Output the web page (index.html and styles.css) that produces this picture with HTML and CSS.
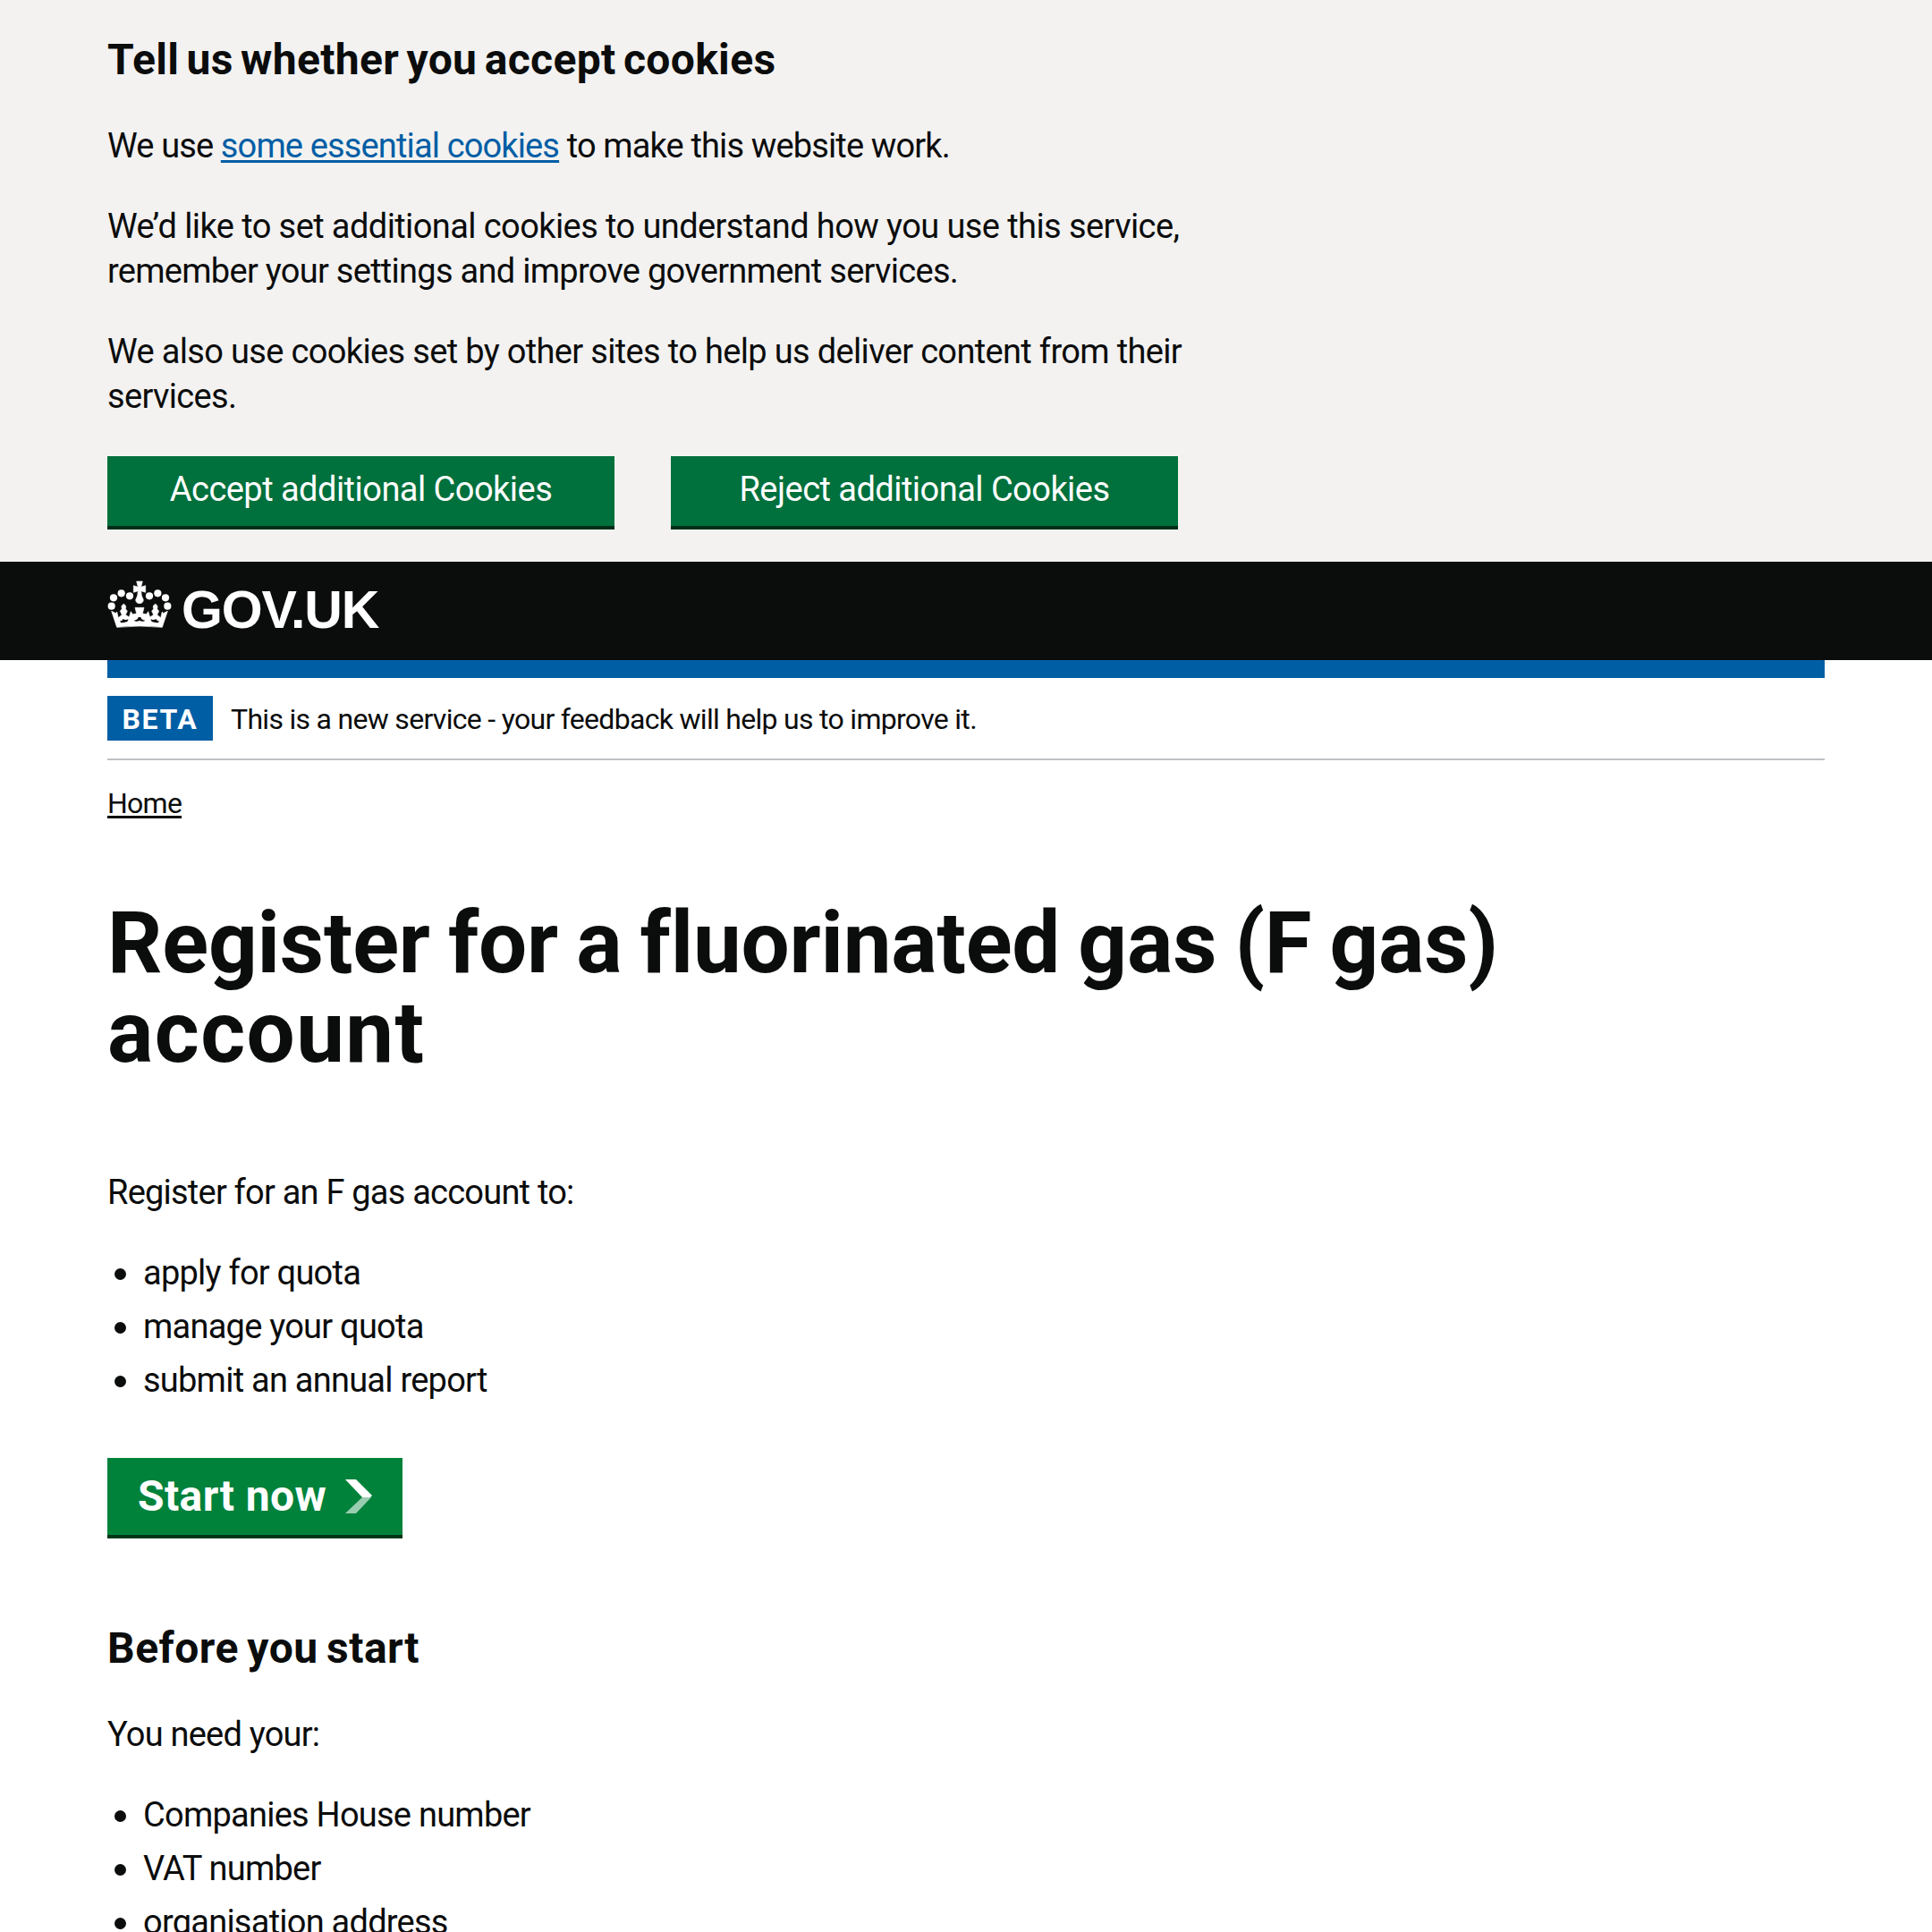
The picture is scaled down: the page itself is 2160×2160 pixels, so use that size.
FILE: index.html
```html
<!DOCTYPE html>
<html lang="en">
<head>
<meta charset="utf-8">
<title>Register for a fluorinated gas (F gas) account - GOV.UK</title>
<link rel="stylesheet" href="styles.css">
</head>
<body>
<section class="cookie-banner">
  <h2 class="heading cookie-heading">Tell us whether you accept cookies</h2>
  <p class="text text-tight">We use <a class="link" href="#">some essential cookies</a> to make this website work.</p>
  <p class="text"><span class="text-wide">We’d like to set additional cookies to understand how you use this service,</span><br><span class="text-narrow">remember your settings and improve government services.</span></p>
  <p class="text">We also use cookies set by other sites to help us deliver content from their<br>services.</p>
  <div class="button-group">
    <button class="button" type="button">Accept additional Cookies</button>
    <button class="button" type="button">Reject additional Cookies</button>
  </div>
</section>
<header class="header">
  <svg class="crown" viewBox="60 88 216 162" fill="#fff" aria-hidden="true">
    <circle cx="74" cy="174" r="12.3"/><circle cx="81" cy="146" r="12.3"/><circle cx="107" cy="131" r="12.3"/><circle cx="135" cy="140" r="12.3"/>
    <circle cx="201" cy="140" r="12.3"/><circle cx="229" cy="131" r="12.3"/><circle cx="255" cy="146" r="12.3"/><circle cx="262" cy="174" r="12.3"/>
    <path stroke="#fff" stroke-width="2" d="M158 91h20l-5 19 15-5v23l-15-5 2 16 6 14c0 7-6 12-13 12s-13-5-13-12l6-14 2-16-15 5v-23l15 5z"/>
    <path stroke="#fff" stroke-width="2" stroke-linejoin="round" d="M92 245l-18-54 15 7 3-5 5 20 12-10-6-12 6-8c-3-10 0-12 6-16 6 4 9 6 6 16l6 8-6 12 12 8 6-19 6 9 13-2-5-20h30l-5 20 13 2 6-9 6 19 12-8-6-12 6-8c-3-10 0-12 6-16 6 4 9 6 6 16l6 8-6 12 12 10 5-20 3 5 15-7-18 54q-76-8-152 0z"/>
    <path fill="#0b0c0c" d="M103 222q8 3 9-5 12 6 18 0 1 7-5 10-11 3-20 3zM233 222q-8 3-9-5-12 6-18 0-1 7 5 10 11 3 20 3zM149 222q13-1 15-11h8q2 10 15 11-8 6-19 0-11 6-19 0z"/>
  </svg>
  <span class="logotype">GOV.UK</span>
</header>
<div class="container">
  <div class="phase-banner">
    <strong class="tag">BETA</strong>
    <span class="phase-text">This is a new service - your feedback will help us to improve it.</span>
  </div>
  <nav class="breadcrumbs"><a class="crumb" href="#">Home</a></nav>
  <main>
    <h1 class="title">Register for a fluorinated gas (F gas)<br><span class="title-end">account</span></h1>
    <p class="text intro">Register for an F gas account to:</p>
    <ul class="list">
      <li>apply for quota</li>
      <li>manage your quota</li>
      <li>submit an annual report</li>
    </ul>
    <a class="start-button" href="#">Start now
      <svg class="arrow" viewBox="0 0 30 38" aria-hidden="true"><path fill="#fff" d="M0 0h12l18 18-2 2H19z"/><path fill="#99cdb0" d="M19 20h10L12 38H0z"/></svg>
    </a>
    <h2 class="heading section-heading">Before you start</h2>
    <p class="text intro">You need your:</p>
    <ul class="list">
      <li>Companies House number</li>
      <li>VAT number</li>
      <li>organisation address</li>
    </ul>
  </main>
</div>
</body>
</html>
```
FILE: styles.css
```css
html, body { height: 2160px; overflow: hidden; }
body { margin: 0; background: #fff; color: #0b0c0c; font-family: Roboto, "Liberation Sans", sans-serif; }
.cookie-banner { box-sizing: border-box; height: 628px; padding: 37px 120px 0; background: #f3f2f1; }
.heading { margin: 0; font-size: 48px; line-height: 60px; font-weight: 700; letter-spacing: 0.5px; word-spacing: -3px; }
.cookie-heading { margin-bottom: 41px; letter-spacing: 0.35px; word-spacing: -4px; }
.text { margin: 0 0 40px; font-size: 38px; line-height: 50px; letter-spacing: -0.66px; white-space: nowrap; }
.text-tight { letter-spacing: -0.86px; }
.text-wide { letter-spacing: -0.59px; }
.text-narrow { letter-spacing: -0.72px; }
.intro { letter-spacing: -0.78px; }
.link { color: #005ea5; text-decoration: underline; text-decoration-thickness: 3px; text-underline-offset: 3px; text-decoration-skip-ink: none; }
.button-group { display: flex; gap: 63px; padding-top: 2px; }
.button { box-sizing: border-box; width: 567px; height: 82px; padding: 0 0 4px; border: 0; border-bottom: 4px solid #002d18; background: #00703c; color: #fff; font: 400 38px/74px Roboto, "Liberation Sans", sans-serif; letter-spacing: -0.53px; }
.header { display: flex; align-items: flex-start; box-sizing: border-box; height: 110px; padding: 21px 120px 0; background: #0b0c0c; color: #fff; }
.crown { width: 72px; height: 54px; }
.logotype { margin-left: 11px; font-family: "Liberation Sans", sans-serif; font-size: 59px; line-height: 66px; font-weight: 700; letter-spacing: -1.2px; }
.container { margin: 0 120px; border-top: 20px solid #005ea5; }
.phase-banner { display: flex; gap: 20px; padding: 20px 0; border-bottom: 2px solid #bfc1c3; font-size: 32px; line-height: 48px; }
.tag { box-sizing: border-box; width: 118px; height: 50px; padding-top: 2px; background: #005ea5; color: #fff; text-align: center; font-weight: 700; letter-spacing: 1.6px; }
.phase-text { padding-top: 2px; letter-spacing: -0.7px; }
.breadcrumbs { margin-top: 23px; font-size: 32px; line-height: 50px; letter-spacing: -0.75px; }
.crumb { color: #0b0c0c; text-decoration: underline; text-decoration-thickness: 3px; text-underline-offset: 3px; }
.title { margin: 81px 0 104px; font-size: 96px; line-height: 100px; font-weight: 700; letter-spacing: -0.2px; word-spacing: -3.5px; }
.title-end { letter-spacing: 1.4px; }
.list { margin: 0; padding-left: 40px; list-style: none; font-size: 38px; line-height: 50px; letter-spacing: -0.76px; }
.list li { display: flex; align-items: center; margin-bottom: 10px; }
.list li::before { content: ""; width: 13px; height: 13px; margin: 2px 19px 0 -32px; border-radius: 50%; background: #0b0c0c; }
.start-button { display: flex; align-items: center; gap: 21px; box-sizing: border-box; width: 330px; height: 90px; margin-top: 62px; padding-left: 34px; border-bottom: 4px solid #003618; background: #00823b; color: #fff; font-size: 48px; line-height: 86px; font-weight: 700; letter-spacing: 0.4px; text-decoration: none; }
.arrow { width: 30px; height: 38px; }
.section-heading { margin: 93px 0 41px; }
```
